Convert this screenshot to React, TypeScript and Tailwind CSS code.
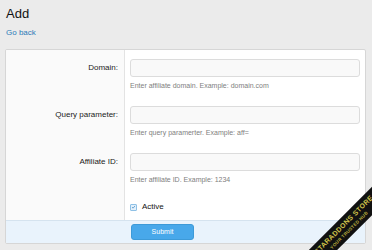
export default function App() {
  const rows = [
    { label: "Domain:", hint: "Enter affiliate domain. Example: domain.com" },
    { label: "Query parameter:", hint: "Enter query paramerter. Example: aff=" },
    { label: "Affiliate ID:", hint: "Enter affiliate ID. Example: 1234" },
  ]

  return (
    <div
      className="relative h-[250px] w-full overflow-hidden bg-[#ebebeb] text-[#222]"
      style={{ fontFamily: '"Liberation Sans", Arial, sans-serif' }}
    >
      <div className="px-[6px] pt-[6px]">
        <h1 className="text-[13px] leading-[16px] font-normal text-[#111]">Add</h1>
        <a className="mt-[6px] block text-[8px] leading-[10px] text-[#2b7bb9]">Go back</a>
      </div>

      <div className="mx-[5px] mt-[11px] w-[361px] overflow-hidden rounded-[2px] border border-[#d6d6d6] bg-white">
        {rows.map((r) => (
          <div key={r.label} className="flex">
            <div className="flex w-[119px] justify-end border-r border-[#e3e3e3] bg-[#fafafa] pt-[9px] pr-[6px]">
              <span className="text-[8px] leading-[18px] text-[#1a1a1a]">{r.label}</span>
            </div>
            <div className="flex-1 px-[5px] pt-[9px] pb-[7px]">
              <div className="h-[18px] w-full rounded-[3px] border border-[#dcdcdc] bg-[#f9f9f9]" />
              <p className="mt-[4px] text-[7px] leading-[9px] text-[#808080]">{r.hint}</p>
            </div>
          </div>
        ))}

        <div className="flex">
          <div className="w-[119px] border-r border-[#e3e3e3] bg-[#fafafa]" />
          <div className="flex flex-1 items-center gap-[5px] px-[5px] pt-[11px] pb-[8px]">
            <span className="flex h-[7px] w-[7px] items-center justify-center rounded-[1px] border border-[#8fc1e6] bg-[#e3f0fb]">
              <svg viewBox="0 0 10 10" className="h-[6px] w-[6px]">
                <path d="M2 5.2 L4.2 7.3 L8 2.8" fill="none" stroke="#4f93c6" strokeWidth="1.6" />
              </svg>
            </span>
            <span className="text-[8px] leading-[10px] text-[#111]">Active</span>
          </div>
        </div>

        <div className="flex h-[23px] items-center border-t border-[#d5e3ef] bg-[#e9f3fc] pl-[125px]">
          <button className="h-[16px] w-[63px] rounded-[3px] border border-[#3d9ad8] bg-[#48a8ea] text-[7px] text-white">
            Submit
          </button>
        </div>
      </div>

      {/* corner watermark ribbon */}
      <div className="absolute top-[217px] left-[266px] flex h-[20px] w-[160px] -rotate-45 flex-col items-center justify-center gap-[2px] bg-[#111] font-bold">
        <span className="text-[7px] leading-[7px] tracking-[0.3px] text-[#cfc24a]">STARADDONS STORE</span>
        <span className="text-[4.5px] leading-[5px] tracking-[0.3px] text-[#b9ad3e]">YOUR TRUSTED HUB</span>
      </div>
    </div>
  )
}
